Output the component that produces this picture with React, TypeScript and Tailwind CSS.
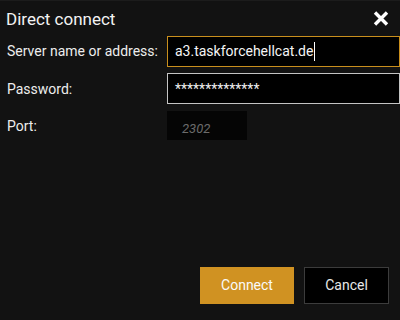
export default function App() {
  return (
    <div
      className="w-[400px] h-[320px] bg-[#121212] flex flex-col text-white overflow-hidden"
      style={{ fontFamily: 'Roboto, "Liberation Sans", sans-serif' }}
    >
      {/* title bar */}
      <div className="h-[36px] flex items-center justify-between pl-[6px] pr-[11px] border-t border-[#1c1c1c]">
        <span className="text-[17px] leading-[36px] text-[#f2f2f2]">Direct connect</span>
        <svg width="16" height="15" viewBox="0 0 16 15">
          <path d="M2 1.5 L14 13.5 M14 1.5 L2 13.5" stroke="#ffffff" strokeWidth="3.4" strokeLinecap="butt" />
        </svg>
      </div>

      {/* form */}
      <div className="flex flex-col">
        <div className="flex items-center h-[31px]">
          <label className="w-[167px] pl-[7px] text-[14px] text-[#ededed]">Server name or address:</label>
          <div className="flex-1 h-full bg-black border border-[#c98f1d] flex items-center pl-[7px]">
            <span className="text-[14px] text-[#f5f5f5]">a3.taskforcehellcat.de</span>
            <span className="w-px h-[19px] bg-white ml-px" />
          </div>
        </div>
        <div className="flex items-center h-[31px] mt-[6px]">
          <label className="w-[167px] pl-[7px] text-[14px] text-[#ededed] pt-[2px]">Password:</label>
          <div className="flex-1 h-full bg-black border border-[#c4c4c4] flex items-center pl-[7px]">
            <span className="text-[14px] text-[#f0f0f0] pt-[2px]">**************</span>
          </div>
        </div>
        <div className="flex items-center h-[29px] mt-[7px]">
          <label className="w-[167px] pl-[7px] text-[14px] text-[#ededed] pt-[2px]">Port:</label>
          <div className="w-[80px] h-full bg-[#050505] flex items-center pl-[15px] pt-[6px]">
            <span className="text-[13px] italic text-[#6b6b6b]">2302</span>
          </div>
        </div>
      </div>

      {/* buttons */}
      <div className="mt-auto flex justify-end gap-[10px] pr-[11px] pb-[16px]">
        <button className="w-[94px] h-[37px] bg-[#d09222] text-[14px] text-[#fafafa]">Connect</button>
        <button className="w-[85px] h-[37px] bg-black border border-[#3c3c3c] text-[14px] text-[#e8e8e8]">Cancel</button>
      </div>
    </div>
  );
}
